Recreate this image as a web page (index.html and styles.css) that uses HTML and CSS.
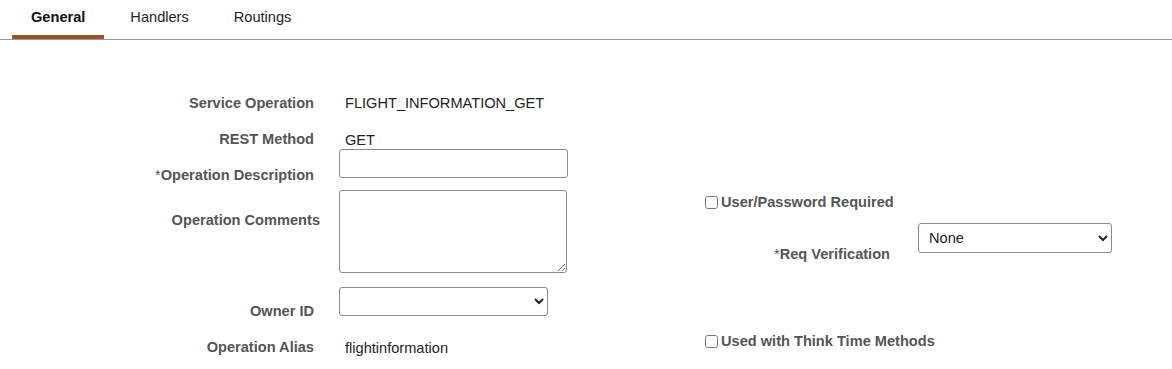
FILE: index.html
```html
<!DOCTYPE html>
<html lang="en">
<head>
    <meta charset="UTF-8">
    <title>Service Operation - General</title>
    <link rel="stylesheet" href="styles.css">
</head>
<body>
    <!-- Tabs -->
    <nav class="tabs">
        <a class="tab active" href="#">General</a>
        <a class="tab" href="#">Handlers</a>
        <a class="tab" href="#">Routings</a>
    </nav>

    <div class="form">
        <!-- Left column -->
        <div class="col-left">
            <div class="row row-text">
                <span class="label">Service Operation</span>
                <span class="value">FLIGHT_INFORMATION_GET</span>
            </div>
            <div class="row row-text row-method">
                <span class="label">REST Method</span>
                <span class="value">GET</span>
            </div>
            <div class="row row-desc">
                <span class="label"><span class="req">*</span>Operation Description</span>
                <input class="input" type="text">
            </div>
            <div class="row row-comments">
                <span class="label">Operation Comments</span>
                <textarea class="textarea"></textarea>
            </div>
            <div class="row row-owner">
                <span class="label">Owner ID</span>
                <select class="select select-owner"><option></option></select>
            </div>
            <div class="row row-text row-alias">
                <span class="label">Operation Alias</span>
                <span class="value">flightinformation</span>
            </div>
        </div>

        <!-- Right column -->
        <div class="col-right">
            <label class="check">
                <input type="checkbox">
                <span>User/Password Required</span>
            </label>
            <div class="verify">
                <span class="label verify-label"><span class="req">*</span>Req Verification</span>
                <select class="select select-verify"><option>None</option></select>
            </div>
            <label class="check check-think">
                <input type="checkbox">
                <span>Used with Think Time Methods</span>
            </label>
        </div>
    </div>
</body>
</html>
```

FILE: styles.css
```css
* {
    margin: 0;
    padding: 0;
    box-sizing: border-box;
}

body {
    background: #ffffff;
    color: #222222;
    font-family: 'Liberation Sans', Arial, sans-serif;
    font-size: 14.6px;
}

/* Tabs */
.tabs {
    display: flex;
    gap: 7px;
    padding-left: 12px;
    height: 40px;
    border-bottom: 1px solid #9a9a9a;
}

.tab {
    display: block;
    padding: 0 19px;
    height: 39px;
    line-height: 35px;
    color: #222222;
    text-decoration: none;
}

.tab.active {
    font-weight: bold;
    color: #111111;
    border-bottom: 4px solid #a0522d;
}

/* Form */
.form {
    display: flex;
}

.col-left {
    width: 705px;
    padding-top: 53px;
    display: flex;
    flex-direction: column;
}

.row {
    display: grid;
    grid-template-columns: 314px auto;
    column-gap: 25px;
    justify-items: start;
}

.label {
    justify-self: end;
    font-weight: bold;
    color: #555555;
    line-height: 16px;
    white-space: nowrap;
}

.req {
    font-weight: normal;
    color: #555555;
}

.value {
    padding-left: 6px;
    line-height: 16px;
    color: #222222;
}

.row-text {
    height: 20px;
    align-items: center;
}

.row-method {
    margin-top: 16px;
}

.row-method .value {
    margin-top: 2px;
}

.row-desc {
    height: 34px;
}

.row-desc .label {
    align-self: end;
}

.input {
    width: 229px;
    height: 29px;
    border: 1px solid #8a8a8a;
    border-radius: 3px;
    padding: 0 6px;
    font: inherit;
}

.row-comments {
    margin-top: 7px;
}

.row-comments .label {
    padding-top: 22px;
    margin-right: -6px;
}

.textarea {
    width: 228px;
    height: 83px;
    border: 1px solid #8a8a8a;
    border-radius: 3px;
    font: inherit;
}

.row-owner {
    margin-top: 14px;
    height: 32px;
}

.row-owner .label {
    align-self: end;
}

.select {
    height: 29px;
    border: 1px solid #8a8a8a;
    border-radius: 3px;
    background: #ffffff;
    color: #222222;
    font: inherit;
    padding: 0 6px;
}

.select-owner {
    width: 209px;
}

.row-alias {
    margin-top: 18px;
}

.row-alias .value {
    margin-top: 1px;
}

/* Right column */
.col-right {
    padding-top: 154px;
    display: flex;
    flex-direction: column;
}

.check {
    display: flex;
    align-items: center;
    gap: 3px;
    height: 16px;
    font-weight: bold;
    color: #555555;
}

.check input {
    width: 13px;
    height: 13px;
    margin: 0;
}

.verify {
    display: flex;
    margin-top: 13px;
    height: 39px;
}

.verify-label {
    width: 185px;
    text-align: right;
    align-self: end;
}

.select-verify {
    margin-left: 28px;
    width: 194px;
    height: 30px;
}

.check-think {
    margin-top: 71px;
}
```
